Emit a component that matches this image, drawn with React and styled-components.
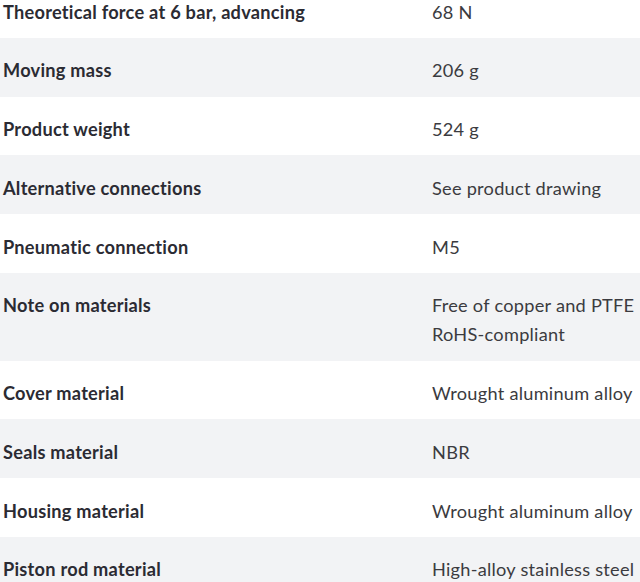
import React from "react";
import styled, { createGlobalStyle } from "styled-components";

const Global = createGlobalStyle`
  html, body { margin: 0; padding: 0; background: #ffffff; overflow: hidden; }
  body { font-family: Lato, "Noto Sans", sans-serif; }
`;

const Table = styled.div`
  display: flex;
  flex-direction: column;
  width: 640px;
  margin-top: -21px;
`;

const Row = styled.div`
  display: grid;
  grid-template-columns: 429px 1fr;
  padding: 18.5px 0 11.25px 3px;
  background: ${(p) => (p.$shaded ? "#f2f3f5" : "#ffffff")};
  line-height: 29px;
  font-size: 18.2px;
  letter-spacing: 0.25px;
`;

const Label = styled.div`
  font-weight: 700;
  color: #2b2b33;
`;

const Value = styled.div`
  font-weight: 400;
  color: #3b3b40;
  white-space: nowrap;
`;

const rows = [
  ["Theoretical force at 6 bar, advancing", ["68 N"]],
  ["Moving mass", ["206 g"]],
  ["Product weight", ["524 g"]],
  ["Alternative connections", ["See product drawing"]],
  ["Pneumatic connection", ["M5"]],
  ["Note on materials", ["Free of copper and PTFE", "RoHS-compliant"]],
  ["Cover material", ["Wrought aluminum alloy"]],
  ["Seals material", ["NBR"]],
  ["Housing material", ["Wrought aluminum alloy"]],
  ["Piston rod material", ["High-alloy stainless steel"]],
];

export default function App() {
  return (
    <>
      <Global />
      <Table>
        {rows.map(([label, values], i) => (
          <Row key={label} $shaded={i % 2 === 1}>
            <Label>{label}</Label>
            <Value>
              {values.map((v) => (
                <div key={v}>{v}</div>
              ))}
            </Value>
          </Row>
        ))}
      </Table>
    </>
  );
}
